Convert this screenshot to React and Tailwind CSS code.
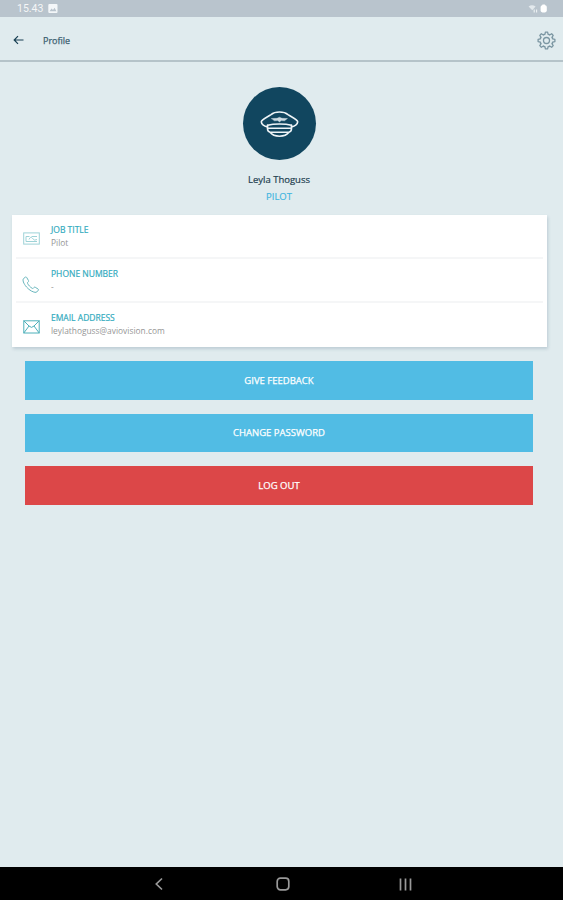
import React from "react";

const GEAR = Array.from({ length: 8 }, (_, i) => i * 45);

function StatusBar() {
  return (
    <div className="flex h-[17px] items-center justify-between bg-[#b9c4cd] pl-[17px] pr-[15px] text-white">
      <div className="flex items-center gap-[5px]">
        <span className="pt-px font-[Roboto,sans-serif] text-[10.5px] leading-4 opacity-85">15.43</span>
        <svg width="10" height="9" viewBox="0 0 10 9">
          <rect x="0.3" y="0" width="9.2" height="9" rx="1" fill="#f4f7f9" />
          <path d="M1.5 7.2 3.6 4.6 5 6 6.6 3.8 8.4 7.2Z" fill="#b9c4cd" />
        </svg>
      </div>
      <svg width="20" height="9" viewBox="0 0 20 9">
        <path d="M0.6 2.6Q4 0 7.6 2.6L4.3 6.2Z" fill="#e3e9ed" />
        <path d="M6.2 5.5v3M8.6 5.5v3" stroke="#eef2f4" strokeWidth="1.1" />
        <rect x="12.6" y="1.2" width="6.2" height="7.2" rx="1.8" fill="#fff" />
        <rect x="14.2" y="0.4" width="3" height="2" rx="0.5" fill="#fff" />
      </svg>
    </div>
  );
}

function Header() {
  return (
    <header className="flex h-[45px] items-center border-b-2 border-[#b5c3c9] pl-[13px] pr-[7px] pt-[4px]">
      <svg width="11" height="10" viewBox="0 0 11 10" fill="none" stroke="#173f52" strokeWidth="1.2" className="mb-px">
        <path d="M10.5 5H1.4M5 1.2 1.2 5 5 8.8" />
      </svg>
      <h1 className="ml-[19px] pt-px text-[9px] leading-3 text-[#3b6070] [-webkit-text-stroke:0.25px_#3b6070]">Profile</h1>
      <svg width="19" height="19" viewBox="-9.5 -9.5 19 19" fill="none" stroke="#7b96a2" strokeWidth="1.3" strokeLinejoin="round" className="ml-auto">
        <circle r="3" />
        {GEAR.map((a) => (
          <path key={a} transform={`rotate(${a})`} d="M-3.1 -5.9 -1.6 -6.1 -1.1 -8.4H1.1L1.6 -6.1 3.1 -5.9" />
        ))}
      </svg>
    </header>
  );
}

function PilotCap() {
  return (
    <svg width="39" height="28" viewBox="0 0 39 28" fill="none" stroke="#eef4f7" strokeWidth="1.6" strokeLinecap="round" strokeLinejoin="round">
      <path d="M7.5 17C4 16 1.6 14 1.3 11.8 1.5 9.5 7 7.200 11 4.600 15 1.200 24 1.200 28 4.600 32 7.200 37.500 9.500 37.700 11.800 37.400 14 35 16 31.500 17" />
      <path d="M7.500 15.300C14 13.600 25 13.600 31.500 15.300M8.500 18.300H30.500" />
      <path d="M7.500 15.300V18.800C7.500 20.800 8.500 21.800 10 22.300 14 27.500 25 27.500 29 22.300 30.500 21.800 31.500 20.800 31.500 18.800V15.300M10 22.300H29" />
      <path d="M11.500 8.500 17 8.300 19.500 7.200 22 8.300 27.500 8.500 24.500 10.800 21.300 10.600 19.500 12 17.700 10.600 14.500 10.800Z" fill="#cfdde4" strokeWidth=".3" />
    </svg>
  );
}

const ICONS = {
  badge: (
    <svg width="17" height="13" viewBox="0 0 17 13" fill="none" stroke="#9ed3d7" strokeWidth="1">
      <rect x=".7" y=".9" width="15.600" height="11.200" />
      <path d="M3 9.500V4.500H6.500M8.500 4.500H14M3 9.500H14M6 7.500Q7.500 3.800 9.500 6.500T14 7.500" />
    </svg>
  ),
  phone: (
    <svg width="18" height="18" viewBox="0 0 18 18" fill="none" stroke="#68b6bd" strokeWidth="1" strokeLinejoin="round">
      <path d="M3.300 1.200 1.600 2.500C.2 4 1.500 7.500 4.500 11S11.500 16.500 14 16.400L16.300 14.500C16.800 14 16.600 13.400 16 13L13.300 11.300C12.600 10.900 12.100 11.200 11.600 12 11.200 12.600 10.600 12.600 10 12.200 8.200 11.100 6.500 9.200 5.600 7.500 5.300 6.900 5.400 6.400 6 6 6.700 5.500 6.800 5 6.400 4.400L4.700 1.500C4.300.9 3.800.8 3.300 1.200Z" />
    </svg>
  ),
  mail: (
    <svg width="17" height="14" viewBox="0 0 17 14" fill="none" stroke="#4db0ba" strokeWidth="1">
      <rect x=".8" y=".8" width="15.400" height="12.200" />
      <path d="M.8.800 6 6Q8.500 8.800 11 6L16.200.800M.800 13 6 6M16.200 13 11 6" />
    </svg>
  ),
};

function InfoRow({ icon, label, value, className }) {
  return (
    <div className={`flex ${className}`}>
      <div className="flex w-[30px] items-start justify-center pt-[17px]">{ICONS[icon]}</div>
      <div className="pl-[5px] pt-2">
        <div className="text-[8.5px] leading-[13px] text-[#35acc0] [-webkit-text-stroke:0.2px_#35acc0]">{label}</div>
        <div className="text-[8.4px] leading-[13px] text-[#969696]">{value}</div>
      </div>
    </div>
  );
}

function ActionButton({ children, className }) {
  return (
    <button className={`flex h-[38.5px] w-full items-center justify-center pt-px text-[9.5px] text-white [-webkit-text-stroke:0.25px_white] ${className}`}>
      {children}
    </button>
  );
}

export default function App() {
  return (
    <div className="flex h-[900px] w-[563px] flex-col overflow-hidden bg-[#e0ebee] font-['Open_Sans','Noto_Sans',sans-serif]">
      <StatusBar />
      <Header />
      <main className="flex w-[558px] flex-1 flex-col items-center pt-[25px]">
        <div className="ml-px flex h-[73px] w-[73px] items-center justify-center rounded-full bg-[#11465f]">
          <PilotCap />
        </div>
        <div className="mt-3 text-[9.5px] leading-4 text-[#234150] [-webkit-text-stroke:0.2px_#234150]">Leyla Thoguss</div>
        <div className="pt-px text-[9.5px] leading-4 text-[#40b5df] [-webkit-text-stroke:0.15px_#40b5df]">PILOT</div>
        <section className="ml-px mt-[10px] flex h-[132px] w-[535px] flex-col bg-white px-1 shadow-[1px_2px_3px_rgba(110,135,155,0.3)]">
          <InfoRow icon="badge" label="JOB TITLE" value="Pilot" className="h-[44px] border-b-2 border-[#f5f6f7]" />
          <InfoRow icon="phone" label="PHONE NUMBER" value="-" className="h-[44px] border-b-2 border-[#f5f6f7]" />
          <InfoRow icon="mail" label="EMAIL ADDRESS" value="leylathoguss@aviovision.com" className="h-[44px]" />
        </section>
        <div className="mt-[14px] flex w-[508px] flex-col gap-[14px]">
          <ActionButton className="bg-[#51bce4]">GIVE FEEDBACK</ActionButton>
          <ActionButton className="bg-[#51bce4]">CHANGE PASSWORD</ActionButton>
          <ActionButton className="bg-[#dc4748]">LOG OUT</ActionButton>
        </div>
      </main>
      <nav className="flex h-[33px] items-center bg-black pl-[154px] pt-px">
        <svg width="10" height="14" viewBox="0 0 10 14" fill="none" stroke="#999" strokeWidth="1.7">
          <path d="M8 1.5 2.3 7 8 12.5" />
        </svg>
        <svg width="14" height="14" viewBox="0 0 14 14" fill="none" stroke="#999" strokeWidth="1.7" className="ml-[112px]">
          <rect x="1.2" y="1.2" width="11.6" height="11.6" rx="3.2" />
        </svg>
        <svg width="13" height="13" viewBox="0 0 13 13" stroke="#999" strokeWidth="1.7" className="ml-[109px]">
          <path d="M1.5.5v12M6.5.5v12M11.5.5v12" />
        </svg>
      </nav>
    </div>
  );
}
